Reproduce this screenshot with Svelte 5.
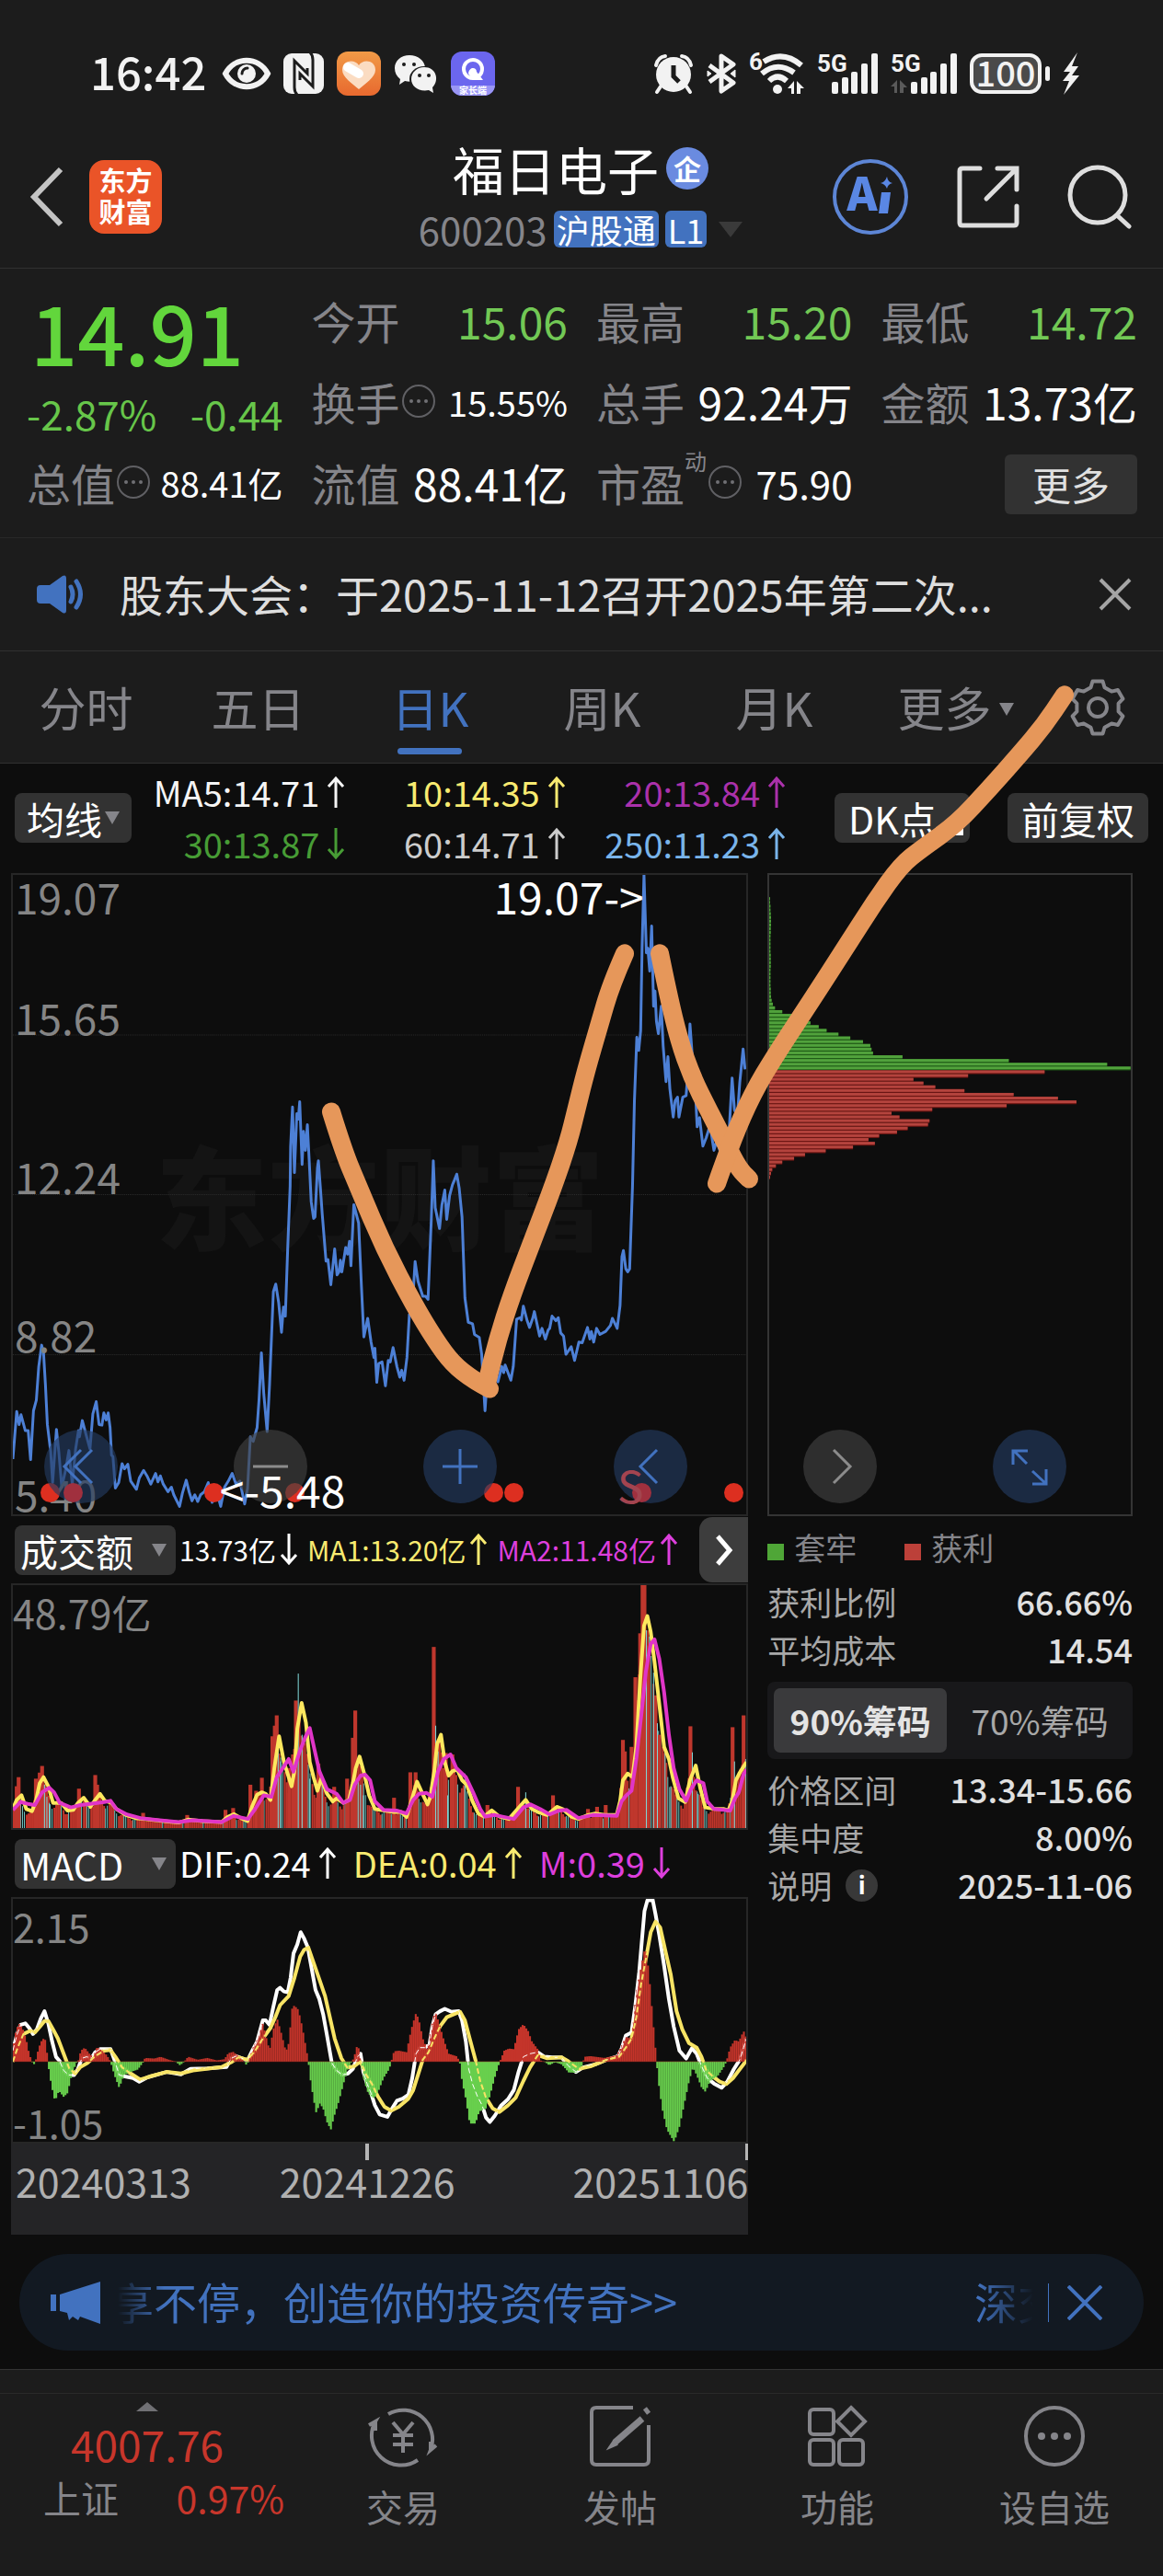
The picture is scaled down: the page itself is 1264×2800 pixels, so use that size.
<script lang="ts">
  type Point = [number, number];

  interface Quote {
    label: string;
    value: string;
    tone?: 'down';
    size?: 'small' | 'medium';
    hint?: boolean;
    sup?: string;
  }

  const quotes: Quote[] = [
    { label: '今开', value: '15.06', tone: 'down' },
    { label: '最高', value: '15.20', tone: 'down' },
    { label: '最低', value: '14.72', tone: 'down' },
    { label: '换手', value: '15.55%', size: 'small', hint: true },
    { label: '总手', value: '92.24万' },
    { label: '金额', value: '13.73亿' },
    { label: '总值', value: '88.41亿', size: 'small', hint: true },
    { label: '流值', value: '88.41亿' },
    { label: '市盈', value: '75.90', size: 'medium', hint: true, sup: '动' },
  ];

  const tabs = ['分时', '五日', '日K', '周K', '月K', '更多'];
  let activeTab = $state('日K');
  let chipRange = $state('90%筹码');

  const averages = [
    { text: 'MA5:14.71', color: '#f5f5f5', up: true },
    { text: '10:14.35', color: '#f8ea70', up: true },
    { text: '20:13.84', color: '#ab31ab', up: true },
    { text: '30:13.87', color: '#479c35', up: false },
    { text: '60:14.71', color: '#cccccc', up: true },
    { text: '250:11.23', color: '#79b4ea', up: true },
  ];

  const volumeValues = [
    { text: '13.73亿', color: '#ffffff', up: false },
    { text: 'MA1:13.20亿', color: '#f8ea70', up: true },
    { text: 'MA2:11.48亿', color: '#dd3fdd', up: true },
  ];

  const macdValues = [
    { text: 'DIF:0.24', color: '#ffffff', up: true },
    { text: 'DEA:0.04', color: '#f8ea70', up: true },
    { text: 'M:0.39', color: '#dd3fdd', up: false },
  ];

  // event markers along the bottom of the price chart, in % of its width
  const markers = [
    { at: 5, dim: false },
    { at: 8.1, dim: true },
    { at: 27.4, dim: false },
    { at: 38.4, dim: false },
    { at: 65.5, dim: false },
    { at: 68.2, dim: false },
    { at: 85.7, dim: true },
    { at: 98.2, dim: false },
  ];

  const priceLine =
    '24,893 32,737 37,780 41,748 50,800 56,800 61,895 67,735 73,700 78,590 84,520 88,545 92,650 96,780 103,870 107,970 115,796 120,870 126,985 134,930 141,865 148,975 155,860 161,800 163,820 169,767 178,820 185,860 191,745 198,705 204,780 210,782 214,742 219,765 223,742 227,790 230,880 233,885 238,988 245,970 252,908 257,925 264,910 270,965 282,992 288,955 297,930 304,948 312,975 322,940 327,968 332,948 338,975 348,1000 355,985 360,1010 372,1048 378,1005 386,962 392,1000 398,1030 404,1010 410,1032 416,1010 424,1000 432,970 440,1035 450,1000 458,1048 466,985 474,965 482,940 490,975 498,965 508,1040 514,990 520,820 526,835 534,790 538,700 543,545 548,680 555,803 560,650 568,345 573,320 579,380 585,478 589,395 593,425 598,200 603,0 ' +
    '604,-130 608,-260 612,-45 617,-238 620,-220 623,-277 628,-72 631,-180 635,-118 639,-202 643,-80 647,50 652,105 655,100 660,-60 662,-84 666,0 670,90 678,245 682,240 688,322 696,205 701,290 705,280 708,242 711,280 719,200 723,222 727,180 730,260 736,60 746,120 752,330 757,493 765,432 772,510 778,560 780,530 784,642 788,580 795,575 802,653 808,570 812,575 818,528 826,590 832,625 836,602 841,635 847,560 852,420 858,400 864,246 870,310 880,360 886,360 891,370 898,100 902,-84 906,70 915,138 920,60 926,12 930,108 936,30 942,-5 946,-20 951,-40 956,5 ' +
    '962,100 968,365 975,445 984,450 988,485 998,495 1003,550 1010,735 1014,640 1025,580 1037,640 1045,590 1049,610 1052,585 1064,635 1069,590 1076,435 1084,430 1086,438 1090,392 1098,440 1103,462 1110,430 1113,410 1124,490 1129,465 1136,500 1142,470 1145,465 1150,425 1158,440 1163,430 1168,480 1174,490 1179,550 1190,525 1197,570 1206,510 1213,512 1224,462 1229,500 1232,475 1237,510 1243,465 1250,485 1262,475 1272,455 1276,432 1286,465 1292,390 1296,230 1299,210 1304,270 1308,280 1312,270 1318,0 ' +
    '1322,-280 1327,-488 1331,-445 1335,-510 1338,-780 1342,-1020 1347,-765 1350,-780 1354,-705 1358,-853 1362,-590 1365,-640 1368,-540 1372,-500 1378,-590 1382,-460 1388,-343 1392,-425 1396,-320 1403,-227 1407,-280 1412,-292 1415,-227 1423,-292 1430,-297 1434,-380 1438,-532 1444,-400 1450,-290 1453,-195 1458,-225 1465,-132 1472,-160 1480,-200 1488,-118 1494,-150 1500,-120 1510,-80 1518,-130 1526,-355 1531,-250 1537,-230 1542,-340 1549,-450 1553,-383';

  const volumeMa1 =
    '24,985 32,955 42,940 52,985 64,992 72,960 80,900 88,880 98,910 108,965 125,965 138,990 150,988 160,965 172,948 186,978 196,955 206,935 216,958 230,965 240,985 260,1005 280,1015 310,1020 340,1025 370,1030 390,1020 420,1025 460,1028 472,1012 486,1002 500,1015 514,1025 524,975 534,938 544,930 552,935 562,955 570,850 580,745 590,830 598,870 606,910 612,860 618,720 627,635 636,700 644,830 652,880 660,925 668,885 680,935 692,960 700,950 714,965 726,955 734,900 740,850 748,812 758,870 768,940 780,985 800,990 820,995 835,995 846,1012 856,960 868,895 878,930 890,970 896,945 904,860 910,770 918,740 926,830 934,875 942,860 952,855 962,890 972,905 984,960 996,1000 1008,1010 1024,990 1040,1010 1060,1018 1078,985 1095,955 1108,985 1120,995 1140,1005 1160,978 1172,985 1190,1010 1205,1018 1225,1005 1240,1000 1260,1005 1285,1005 1292,960 1298,890 1308,868 1318,880 1326,780 1334,560 1342,380 1349,348 1356,400 1364,500 1374,640 1384,780 1394,820 1402,880 1414,950 1428,962 1438,890 1450,842 1460,920 1470,980 1490,985 1508,985 1518,990 1526,960 1534,890 1542,865 1550,845 1556,830';

  const volumeMa2 =
    '24,988 40,962 55,968 70,972 85,930 100,915 110,930 122,965 145,980 165,972 185,968 200,965 215,962 228,958 240,985 262,1003 290,1015 330,1022 370,1028 400,1022 460,1028 485,1008 515,1018 530,985 548,940 564,945 575,880 590,845 600,820 610,862 622,800 634,750 644,718 654,790 664,860 680,920 700,935 714,965 728,955 738,905 750,875 760,872 770,890 780,960 798,988 825,990 846,1000 860,955 872,935 888,932 900,945 912,860 924,820 938,805 950,850 970,880 985,930 1000,985 1010,1010 1030,1005 1070,1018 1090,980 1105,970 1125,985 1145,1003 1165,990 1180,988 1205,1015 1235,1005 1285,1008 1295,960 1305,940 1316,925 1326,820 1336,680 1346,530 1356,440 1364,425 1374,490 1384,600 1394,740 1404,850 1416,920 1430,958 1440,920 1452,890 1466,900 1474,960 1488,985 1522,990 1532,950 1540,930 1550,870 1556,855';

  const upSpikes: Point[] = [
    [32, 910], [36, 880], [72, 885], [80, 865], [85, 843], [162, 918], [196, 873], [200, 905],
    [296, 998], [388, 1005], [468, 988], [484, 982], [520, 905], [532, 925], [544, 882], [566, 745],
    [571, 710], [575, 676], [601, 850], [609, 805], [615, 627], [662, 835], [695, 912], [722, 885],
    [734, 750], [739, 660], [820, 948], [854, 864], [865, 864], [903, 450], [928, 800], [942, 805],
    [1015, 972], [1079, 912], [1152, 940], [1225, 985], [1244, 978], [1262, 972], [1298, 757],
    [1302, 795], [1316, 780], [1324, 550], [1334, 405], [1339, 246], [1343, 246], [1351, 445],
    [1366, 610], [1374, 740], [1439, 712], [1527, 715], [1550, 676],
  ];

  const downSpikes: Point[] = [
    [90, 905], [95, 945], [100, 965], [578, 795], [583, 828], [620, 538], [628, 740], [644, 885],
    [670, 905], [745, 895], [750, 905], [756, 940], [907, 710], [912, 795], [932, 940], [968, 868],
    [1095, 930], [1347, 395], [1362, 535], [1370, 702], [1386, 800], [1398, 910], [1443, 798],
    [1455, 935], [1531, 828], [1555, 820],
  ];

  const histogram =
    '24,690 28,640 36,600 44,615 52,655 58,700 64,726 67,738 71,726 78,680 86,650 92,655 97,720 98,740 104,800 112,857 120,822 130,842 138,830 146,775 156,730 160,726 166,690 174,680 184,700 192,712 200,678 210,690 220,705 228,726 236,770 246,812 256,770 270,760 285,752 296,728 300,714 320,716 332,710 350,720 364,726 373,738 382,726 390,710 410,720 430,714 450,722 466,718 474,698 484,694 494,706 506,724 512,738 517,722 526,680 536,650 546,600 552,640 560,690 568,620 576,585 584,630 592,680 598,690 603,620 608,540 614,545 620,555 628,610 636,680 641,724 645,780 652,850 658,898 664,862 672,880 680,925 688,950 694,910 704,860 714,800 724,745 736,715 744,666 748,700 752,735 758,790 766,830 778,848 788,820 798,780 810,750 814,727 820,692 830,690 846,695 856,620 866,565 872,590 880,650 890,690 900,600 906,560 914,600 924,655 934,700 950,708 957,724 962,790 970,850 978,930 990,930 998,890 1012,880 1020,840 1030,780 1040,730 1050,690 1060,683 1070,685 1080,620 1090,603 1100,625 1108,660 1120,685 1126,722 1136,728 1144,738 1156,728 1170,735 1185,762 1200,762 1212,740 1218,710 1230,708 1260,714 1285,705 1294,680 1304,645 1316,650 1326,500 1334,430 1345,345 1352,430 1360,580 1368,720 1372,790 1380,880 1390,950 1405,990 1416,940 1428,850 1436,790 1444,745 1452,770 1462,810 1470,825 1480,790 1495,775 1508,745 1514,726 1522,680 1532,655 1540,660 1550,625 1556,650';

  const difLine =
    '24,690 32,640 40,605 50,600 58,615 66,635 74,620 82,585 90,560 98,600 106,660 114,710 122,725 130,755 140,770 152,770 160,750 168,715 178,710 188,715 196,695 206,685 228,685 236,720 246,770 258,775 275,780 288,792 305,778 345,760 375,768 395,750 430,748 470,744 480,715 490,708 514,722 524,690 534,660 546,590 552,590 560,605 568,545 576,490 582,483 590,495 598,498 604,450 610,370 618,340 625,300 632,320 640,350 648,420 656,490 664,520 672,570 680,640 690,730 700,755 712,770 724,765 734,750 744,710 750,700 756,760 764,800 772,830 780,870 790,900 806,908 816,880 826,855 838,848 850,835 858,780 866,700 874,680 884,680 894,670 900,610 907,570 916,560 926,552 940,562 955,560 962,590 970,660 976,750 984,800 994,840 1004,870 1012,910 1020,925 1030,905 1044,870 1058,850 1070,820 1080,760 1090,710 1104,700 1120,695 1134,710 1150,712 1170,712 1184,740 1200,760 1215,745 1240,735 1260,722 1288,708 1296,680 1304,640 1316,630 1324,540 1332,430 1338,320 1343,230 1349,195 1360,192 1366,240 1374,310 1384,410 1394,520 1404,610 1416,690 1430,716 1442,682 1452,700 1462,740 1474,780 1488,798 1504,812 1516,792 1530,750 1542,720 1550,680 1556,650';

  const deaLine =
    '24,726 34,680 46,635 60,625 70,630 80,612 90,592 98,592 108,620 118,650 130,700 142,750 154,765 164,745 180,730 196,708 214,690 228,688 238,710 252,745 270,765 290,785 310,775 345,760 375,765 400,755 460,744 480,728 495,712 514,720 530,690 546,650 562,615 572,580 582,540 600,510 612,450 624,380 632,358 641,350 652,400 664,455 676,510 686,580 696,650 710,715 722,745 736,742 750,725 762,770 774,800 786,840 800,875 814,888 830,875 850,848 860,820 870,770 880,720 892,695 904,650 916,610 930,580 945,570 958,562 968,590 978,650 990,720 1000,790 1012,845 1026,880 1040,892 1058,870 1074,845 1090,790 1104,745 1120,705 1140,715 1170,712 1184,725 1206,750 1230,742 1260,722 1290,710 1304,680 1316,650 1326,580 1336,470 1348,370 1356,300 1366,265 1376,285 1388,370 1398,440 1410,560 1422,620 1436,665 1452,680 1462,710 1472,755 1486,775 1500,792 1514,800 1528,780 1540,755 1550,735 1556,720';

  // chip distribution, one bar per price step, top to bottom
  const chips = [
    3, 3, 4, 4, 5, 6, 6, 6, 5, 5, 4, 4, 4, 4, 4, 5, 5, 5, 5, 4, 4, 4, 4, 4, 5, 5, 6, 8, 12, 19, 43,
    76, 106, 136, 163, 189, 228, 267, 309, 333, 337, 342, 439, 789, 1113, 1190, 907, 655, 475, 508,
    547, 643, 805, 951, 1012, 782, 537, 403, 429, 528, 523, 456, 421, 362, 327, 348, 276, 186, 118,
    82, 43, 22, 10, 6, 3,
  ];
  const TRAPPED = 46;

  const inkStrokes = [
    '360,1208 373,1250 390,1291 418,1357 450,1418 473,1456 492,1482 514,1499 532,1509',
    '679,1036 664,1070 651,1115 637,1163 627,1203 618,1240 601,1290 578,1350 556,1408 541,1455 529,1503',
    '717,1036 726,1080 738,1130 752,1170 771,1208 790,1245 803,1270 814,1281',
    '779,1286 795,1240 818,1188 843,1146 880,1090 920,1028 950,981 979,940 1002,922 1040,895 1075,857 1108,820 1135,788 1157,755',
  ];

  function parse(points: string): Point[] {
    return points.split(' ').map((p) => p.split(',').map(Number) as Point);
  }

  /** Smooth a hand-drawn stroke by curving through segment midpoints */
  function smooth(points: string): string {
    const pts = parse(points);
    let d = `M${pts[0]}`;
    for (let i = 1; i < pts.length - 1; i++) {
      const mid = [(pts[i][0] + pts[i + 1][0]) / 2, (pts[i][1] + pts[i + 1][1]) / 2];
      d += `Q${pts[i]} ${mid}`;
    }
    return `${d}L${pts[pts.length - 1]}`;
  }

  function sample(points: Point[], x: number): number {
    const i = points.findIndex((p) => p[0] >= x);
    if (i <= 0) return points[i === 0 ? 0 : points.length - 1][1];
    const [x0, y0] = points[i - 1];
    const [x1, y1] = points[i];
    return y0 + ((y1 - y0) * (x - x0)) / (x1 - x0);
  }

  const STEP = 3.85;
  const days = Array.from({ length: 398 }, (_, i) => 24 + i * STEP);

  const ma1 = parse(volumeMa1);
  const volumeBars = days.map((x, i) => {
    const base = sample(ma1, x + 6);
    const wobble = 0.72 + 0.3 * Math.abs(Math.sin(i * 2.7));
    const falling = sample(ma1, x + 5) > sample(ma1, x - 5) + 2;
    const down = falling ? i % 5 < 2 : i % 11 === 4;
    return { x, h: (1048 - base) * wobble, down };
  });

  const hist = parse(histogram);
  const macdBars = days.map((x) => ({ x, y: sample(hist, x + STEP / 2) }));

  /** Cog outline with six teeth, centred on 32,32 */
  function cog(): string {
    const pts: string[] = [];
    for (let t = 0; t < 6; t++) {
      for (const [offset, r] of [[-19, 23], [-11, 29], [11, 29], [19, 23]]) {
        const a = ((t * 60 - 90 + offset) * Math.PI) / 180;
        pts.push(`${(32 + r * Math.cos(a)).toFixed(1)},${(32 + r * Math.sin(a)).toFixed(1)}`);
      }
    }
    return pts.join(' ');
  }
</script>

{#snippet arrow(up: boolean)}
  <svg class="arrow" viewBox="0 0 20 36" aria-hidden="true">
    <path d={up ? 'M10 35V3M2 12L10 3L18 12' : 'M10 1V33M2 24L10 33L18 24'} />
  </svg>
{/snippet}

{#snippet reading(item: { text: string; color: string; up: boolean })}
  <span class="reading" style:color={item.color}>{item.text}{@render arrow(item.up)}</span>
{/snippet}

{#snippet signal(idle: boolean)}
  <svg width={idle ? 72 : 65} height="46" viewBox="{idle ? 0 : 7} 0 {idle ? 72 : 65} 46" aria-hidden="true">
    <text x={idle ? 0 : 6} y="21" class="net">5G</text>
    {#if idle}
      <path d="M7 30v14H4v-7H0zM10 44V30l8 8h-4v6z" fill="#5a5a5a" />
    {/if}
    <g fill="#f2f2f2">
      <rect x="22" y="32" width="7" height="13" rx="2" />
      <rect x="33" y="27" width="7" height="18" rx="2" />
      <rect x="43" y="21" width="7" height="24" rx="2" />
      <rect x="54" y="12" width="7" height="33" rx="2" />
      <rect x="65" y="1" width="7" height="44" rx="2" />
    </g>
  </svg>
{/snippet}

<div class="page">
  <div class="status">
    <div class="status__side">
      <span class="clock">16:42</span>
      <svg width="52" height="36" viewBox="0 0 52 36" aria-hidden="true">
        <path d="M3 18C13 -1 39 -1 49 18C39 37 13 37 3 18Z" fill="none" stroke="#f2f2f2" stroke-width="6" />
        <circle cx="26" cy="18" r="10" fill="#f2f2f2" />
        <path d="M21 18a6 6 0 0 1 6-6" fill="none" stroke="#1c1c1c" stroke-width="3" stroke-linecap="round" />
      </svg>
      <svg width="44" height="44" viewBox="0 0 44 44" aria-hidden="true">
        <rect width="44" height="44" rx="9" fill="#f2f2f2" />
        <path d="M15 45Q12 42 12 37V8L26 22V16M29 -1Q32 2 32 7V36L18 22V29" fill="none" stroke="#1c1c1c" stroke-width="3" />
      </svg>
      <svg width="48" height="48" viewBox="0 0 48 48" aria-hidden="true">
        <defs>
          <linearGradient id="heart-bg" x1="0" y1="0" x2="0" y2="1">
            <stop offset="0" stop-color="#f19a47" />
            <stop offset="1" stop-color="#e8692f" />
          </linearGradient>
        </defs>
        <rect width="48" height="48" rx="12" fill="url(#heart-bg)" />
        <path d="M24 15C20 8 6 9 6 20C6 28 17 35 24 41C31 35 42 28 42 20C42 9 28 8 24 15Z" fill="#fbdcc2" />
        <path d="M12 17L24 24" stroke="#fff" stroke-width="10" stroke-linecap="round" />
      </svg>
      <svg width="48" height="44" viewBox="0 0 48 44" aria-hidden="true">
        <path d="M17 2C8 2 1 8 1 16C1 21 3 25 7 28L6 34L12 30C25 33 34 25 34 16C34 8 26 2 17 2Z" fill="#f2f2f2" />
        <ellipse cx="33" cy="28" rx="16" ry="14" fill="#1c1c1c" />
        <path d="M33 15C25 15 19 21 19 28C19 36 27 42 38 40L43 43L42 37C50 29 46 15 33 15Z" fill="#f2f2f2" />
        <g fill="#1c1c1c">
          <circle cx="11" cy="12" r="2" /><circle cx="22" cy="12" r="2" />
          <circle cx="28" cy="24" r="2" /><circle cx="38" cy="24" r="2" />
        </g>
      </svg>
      <svg width="48" height="48" viewBox="0 0 48 48" aria-hidden="true">
        <rect width="48" height="48" rx="12" fill="#6b66ee" />
        <path d="M0 37H48A12 12 0 0 1 36 48H12A12 12 0 0 1 0 37Z" fill="#9a96f5" />
        <circle cx="24" cy="19" r="10" fill="none" stroke="#fff" stroke-width="4" />
        <path d="M19 24C20 16 28 17 28 22L35 31H24Z" fill="#fff" />
        <text x="24" y="46" class="mini">家长端</text>
      </svg>
    </div>
    <div class="status__side">
      <svg width="44" height="44" viewBox="0 0 44 44" aria-hidden="true">
        <circle cx="22" cy="23" r="19" fill="#f2f2f2" />
        <path d="M3 13Q5 4 13 3M41 13Q39 4 31 3M8 36L4 42M36 36L40 42" stroke="#f2f2f2" stroke-width="4" fill="none" stroke-linecap="round" />
        <path d="M22 13V25L28 31" fill="none" stroke="#1c1c1c" stroke-width="5" />
      </svg>
      <svg width="32" height="44" viewBox="0 0 32 44" aria-hidden="true">
        <path d="M3 13L29 32L16 41V3L29 12L3 31" fill="none" stroke="#f2f2f2" stroke-width="5" stroke-linejoin="round" />
        <path d="M1 19L5 22L1 25ZM31 18L26 22L31 26Z" fill="#f2f2f2" stroke="#f2f2f2" />
      </svg>
      <svg width="61" height="46" viewBox="0 0 61 46" aria-hidden="true">
        <text x="0" y="19" class="net">6</text>
        <g fill="none" stroke="#f2f2f2" stroke-width="6">
          <path d="M16 10Q37 -3 57 14" /><path d="M14 23Q31 9 49 22" /><path d="M22 31Q31 22 41 31" />
        </g>
        <circle cx="31" cy="40" r="5" fill="#f2f2f2" />
        <path d="M49 31V45H46V39H42ZM52 45V31L60 39H56V45Z" fill="#f2f2f2" />
      </svg>
      {@render signal(false)}
      {@render signal(true)}
      <span class="battery"><b>100</b></span>
      <svg width="18" height="46" viewBox="0 0 18 46" aria-hidden="true">
        <path d="M16 0L1 21H8L0 31H7L1 46L18 25H10L17 15H10Z" fill="#f2f2f2" />
      </svg>
    </div>
  </div>

  <header class="header">
    <div class="header__left">
      <button class="bare" type="button" aria-label="返回">
        <svg width="38" height="66" viewBox="0 0 38 66"><path d="M34 3L5 33L34 63" fill="none" stroke="#c4c4c4" stroke-width="6" /></svg>
      </button>
      <a class="logo" href="#home">东方<br />财富</a>
    </div>
    <div class="header__title">
      <h1>福日电子<span class="badge">企</span></h1>
      <div class="code">
        <span>600203</span><span class="tag">沪股通</span><span class="tag">L1</span><i class="caret caret--dim"></i>
      </div>
    </div>
    <div class="header__right">
      <button class="bare" type="button" aria-label="AI">
        <svg width="84" height="84" viewBox="0 0 84 84">
          <circle cx="42" cy="42" r="39" fill="none" stroke="#5d86d6" stroke-width="4" />
          <text x="33" y="57" class="ai">A</text>
          <path d="M54 37H64L61 60H51ZM60 20Q61 26 66 27Q61 28 60 33Q58 28 53 27Q58 26 60 20Z" fill="#5a87e4" />
        </svg>
      </button>
      <button class="bare" type="button" aria-label="分享">
        <svg width="68" height="68" viewBox="0 0 68 68" fill="none" stroke="#dedede" stroke-width="5" stroke-linecap="round">
          <path d="M25 3H6Q3 3 3 6V62Q3 65 6 65H62Q65 65 65 62V44M44 3H65V26M64 4L32 36" />
        </svg>
      </button>
      <button class="bare" type="button" aria-label="搜索">
        <svg width="70" height="70" viewBox="0 0 70 70" fill="none" stroke="#dedede" stroke-width="5" stroke-linecap="round">
          <circle cx="33" cy="33" r="30" /><path d="M54 55L67 67" />
        </svg>
      </button>
    </div>
  </header>

  <section class="quote">
    <div class="quote__price">
      <strong>14.91</strong>
      <div><span>-2.87%</span><span>-0.44</span></div>
    </div>
    {#each quotes as q}
      <div class="cell">
        <span class="cell__label">
          {q.label}{#if q.sup}<sup>{q.sup}</sup>{/if}{#if q.hint}<i class="hint"><i></i><i></i><i></i></i>{/if}
        </span>
        <span class="cell__value {q.size ?? ''}" class:down={q.tone === 'down'}>{q.value}</span>
      </div>
    {/each}
    <div class="cell cell--end"><button class="more" type="button">更多</button></div>
  </section>

  <section class="notice">
    <svg width="52" height="42" viewBox="0 0 52 42" aria-hidden="true">
      <path d="M4 11H14L28 1Q32 -1 32 4V38Q32 43 28 41L14 31H4Q0 31 0 27V15Q0 11 4 11Z" fill="#4272bf" />
      <path d="M37 13Q41 21 37 29M43 7Q52 21 43 35" fill="none" stroke="#4272bf" stroke-width="5" stroke-linecap="round" />
    </svg>
    <a href="#notice">股东大会：于2025-11-12召开2025年第二次...</a>
    <button class="bare" type="button" aria-label="关闭">
      <svg width="36" height="36" viewBox="0 0 36 36"><path d="M2 2L34 34M34 2L2 34" stroke="#a5a5a5" stroke-width="4" /></svg>
    </button>
  </section>

  <nav class="tabs">
    {#each tabs as tab}
      <button class="tab" class:active={tab === activeTab} type="button" onclick={() => (activeTab = tab)}>
        {tab}{#if tab === '更多'}<i class="caret caret--small"></i>{/if}
      </button>
    {/each}
    <button class="bare tabs__settings" type="button" aria-label="设置">
      <svg width="64" height="64" viewBox="0 0 64 64" fill="none" stroke="#85858a" stroke-width="4" stroke-linejoin="round">
        <polygon points={cog()} /><circle cx="32" cy="32" r="10" />
      </svg>
    </button>
  </nav>

  <main class="board">
    <div class="ma">
      <button class="chip-btn" type="button">均线<i class="caret caret--small"></i></button>
      <div class="ma__values">
        {#each averages as item}{@render reading(item)}{/each}
      </div>
      <div class="ma__actions">
        <button class="chip-btn chip-btn--corner" type="button">DK点</button>
        <button class="chip-btn" type="button">前复权</button>
      </div>
    </div>

    <div class="charts">
      <div class="charts__main">
        <div class="frame frame--tall">
          <div class="watermark">东方财富</div>
          <svg class="plot" viewBox="24 -1020 1532 2094" preserveAspectRatio="none" aria-hidden="true">
            {#each [-496, 27, 551] as y}
              <line x1="24" x2="1556" y1={y} y2={y} stroke="#2c2c2c" stroke-width="3" stroke-dasharray="2 2" />
            {/each}
            <polyline points={priceLine} stroke="#4d80d6" stroke-width="3" />
          </svg>
          <div class="scale">
            <div><span class="scale__top">19.07</span><span>15.65</span></div>
            <div><span>12.24</span></div>
            <div><span>8.82</span></div>
            <div><span>5.40</span></div>
          </div>
          {#each markers as m}
            <i class="marker" class:dim={m.dim} style:left="{m.at}%"></i>
          {/each}
          <span class="note note--high">19.07-&gt;</span>
          <span class="note note--low">&lt;-5.48</span>
          <span class="note note--sell">S</span>
        </div>

        <div class="indicator">
          <button class="chip-btn chip-btn--wide" type="button">成交额<i class="caret caret--small"></i></button>
          <div class="indicator__values indicator__values--dense">
            {#each volumeValues as item}{@render reading(item)}{/each}
          </div>
          <button class="next" type="button" aria-label="下一个指标">
            <svg width="22" height="36" viewBox="0 0 22 36"><path d="M4 3L17 18L4 33" fill="none" stroke="#fff" stroke-width="5" /></svg>
          </button>
        </div>
        <div class="frame">
          <svg class="plot" viewBox="24 246 1532 802" preserveAspectRatio="none" aria-hidden="true">
            {#each volumeBars as b}
              <rect x={b.x} y={1048 - b.h} width={b.down ? 1.9 : STEP} height={b.h} fill={b.down ? '#6fc6c2' : '#c0352b'} />
            {/each}
            {#each upSpikes as [x, y]}
              <rect x={x - 4} {y} width="8" height={1048 - y} fill="#bf372d" />
            {/each}
            {#each downSpikes as [x, y]}
              <rect x={x - 1} {y} width="2" height={1048 - y} fill="#7fd6d6" />
            {/each}
            <polyline points={volumeMa1} stroke="#fde85e" stroke-width="4" />
            <polyline points={volumeMa2} stroke="#e035c8" stroke-width="4" />
          </svg>
          <span class="corner corner--top">48.79亿</span>
        </div>

        <div class="indicator">
          <button class="chip-btn chip-btn--wide" type="button">MACD<i class="caret caret--small"></i></button>
          <div class="indicator__values">
            {#each macdValues as item}{@render reading(item)}{/each}
          </div>
        </div>
        <div class="frame">
          <svg class="plot" viewBox="24 190 1532 800" preserveAspectRatio="none" aria-hidden="true">
            <polyline points={difLine} stroke="#fff" stroke-width="4" />
            <polyline points={deaLine} stroke="#f8e465" stroke-width="4" />
            {#each macdBars as b}
              <rect x={b.x} y={Math.min(b.y, 726)} width="4" height={Math.abs(b.y - 726)} fill={b.y < 726 ? '#c4342a' : '#68cf4d'} />
            {/each}
            <line x1="24" x2="1556" y1="726" y2="726" stroke="#a02c24" />
            <polyline points={difLine} stroke="#fff" stroke-width="1" stroke-dasharray="6 3" />
            <polyline points={deaLine} stroke="#f8e465" stroke-width="2" stroke-dasharray="6 3" />
          </svg>
          <span class="corner corner--top">2.15</span>
          <span class="corner corner--bottom">-1.05</span>
        </div>
        <div class="dates">
          <span>20240313</span><span class="dates__mid">20241226</span><span>20251106</span>
        </div>
      </div>

      <aside class="charts__side">
        <div class="frame frame--tall frame--chips">
          <svg class="plot" viewBox="0 0 1190 1519" preserveAspectRatio="none" aria-hidden="true">
            {#each chips as w, i}
              <rect x="0" y={53 + i * 8.94} width={w} height="9" fill={i < TRAPPED ? '#1f5a16' : '#6b1613'} />
              <rect x="0" y={53 + i * 8.94} width={w} height="6.5" fill={i < TRAPPED ? '#51a23c' : '#b4433d'} />
            {/each}
          </svg>
        </div>
        <div class="legend">
          <span><i class="legend__trapped"></i>套牢</span>
          <span><i class="legend__profit"></i>获利</span>
        </div>
        <dl class="facts">
          <div><dt>获利比例</dt><dd>66.66%</dd></div>
          <div><dt>平均成本</dt><dd>14.54</dd></div>
        </dl>
        <div class="segment">
          {#each ['90%筹码', '70%筹码'] as range}
            <button type="button" class:active={range === chipRange} onclick={() => (chipRange = range)}>{range}</button>
          {/each}
        </div>
        <dl class="facts">
          <div><dt>价格区间</dt><dd>13.34-15.66</dd></div>
          <div><dt>集中度</dt><dd>8.00%</dd></div>
          <div><dt>说明<i class="info">i</i></dt><dd>2025-11-06</dd></div>
        </dl>
      </aside>

      <!-- Floating zoom / pan controls over both charts -->
      <div class="controls">
        <button class="round blue" type="button" aria-label="最左">
          <svg viewBox="0 0 80 80"><path d="M40 22L22 40L40 58M52 22L34 40L52 58" /></svg>
        </button>
        <button class="round" type="button" aria-label="缩小">
          <svg viewBox="0 0 80 80"><path d="M21 40H59" /></svg>
        </button>
        <button class="round blue" type="button" aria-label="放大">
          <svg viewBox="0 0 80 80"><path d="M21 40H59M40 21V59" /></svg>
        </button>
        <button class="round blue" type="button" aria-label="左移">
          <svg viewBox="0 0 80 80"><path d="M47 22L29 40L47 58" /></svg>
        </button>
        <button class="round" type="button" aria-label="右移">
          <svg viewBox="0 0 80 80"><path d="M33 22L51 40L33 58" /></svg>
        </button>
        <button class="round blue" type="button" aria-label="全屏">
          <svg viewBox="0 0 80 80"><path d="M22 38V23H38M23 23L37 37M43 59H58V43M57 58L43 45" /></svg>
        </button>
      </div>
    </div>

    <div class="banner">
      <svg width="54" height="46" viewBox="0 0 54 46" aria-hidden="true">
        <path d="M0 14H6V32H0ZM10 14L54 0V46L32 38L30 42L24 38L20 42L18 34L10 32Z" fill="#4272bf" />
      </svg>
      <a class="banner__text" href="#promo"><span>享不停，创造你的投资传奇&gt;&gt;</span><span>深交</span></a>
      <i class="banner__rule"></i>
      <button class="bare" type="button" aria-label="关闭">
        <svg width="38" height="38" viewBox="0 0 38 38"><path d="M1 1L37 37M37 1L1 37" stroke="#4272bf" stroke-width="4" /></svg>
      </button>
    </div>
  </main>

  <footer class="footer">
    <a class="index" href="#index">
      <i class="caret caret--up"></i>
      <strong>4007.76</strong>
      <span class="index__row"><span>上证</span><em>0.97%</em></span>
    </a>
    <a class="action" href="#trade">
      <svg viewBox="0 0 80 68">
        <path d="M24 10A32 32 0 0 1 70 49L76 44M70 49L70 40M56 60A32 32 0 0 1 10 18L3 22M10 18V28" />
        <path d="M29 19L40 32L51 19M40 32V52M29 33H51M29 43H51" />
      </svg>
      交易
    </a>
    <a class="action" href="#post">
      <svg viewBox="0 0 80 68">
        <path d="M54 3H14Q9 3 9 8V60Q9 65 14 65H66Q71 65 71 60V22" />
        <path d="M64 15L34 41" stroke-width="7" /><path d="M67 8L71 5" stroke-width="7" /><path d="M34 39L30 45L37 42" />
      </svg>
      发帖
    </a>
    <a class="action" href="#features">
      <svg viewBox="0 0 80 68">
        <rect x="10" y="5" width="26" height="27" rx="4" /><rect x="10" y="38" width="26" height="27" rx="4" />
        <rect x="42" y="38" width="26" height="27" rx="4" /><path d="M55 3L70 18L55 33L40 18Z" />
      </svg>
      功能
    </a>
    <a class="action" href="#watchlist">
      <svg viewBox="0 0 80 68">
        <circle cx="40" cy="34" r="31" />
        <g fill="#85858a" stroke="none"><circle cx="26" cy="34" r="4" /><circle cx="40" cy="34" r="4" /><circle cx="54" cy="34" r="4" /></g>
      </svg>
      设自选
    </a>
  </footer>

  <!-- Freehand marks drawn over the page -->
  <svg class="ink" viewBox="0 0 1264 2800" preserveAspectRatio="none" aria-hidden="true">
    {#each inkStrokes as stroke}
      <path d={smooth(stroke)} />
    {/each}
  </svg>
</div>

<style>
  :global(body) {
    background: #1c1c1c;
  }

  .page {
    position: relative;
    background: #1c1c1c;
    color: #fff;
    font-family: 'Noto Sans CJK SC', 'Noto Sans', sans-serif;
    overflow: hidden;
  }

  button {
    border: 0;
    padding: 0;
    background: none;
    color: inherit;
    font: inherit;
    cursor: pointer;
  }

  a {
    color: inherit;
    text-decoration: none;
  }

  svg {
    display: block;
    flex-shrink: 0;
  }

  .bare {
    display: block;
    flex-shrink: 0;
  }

  .caret {
    display: inline-block;
    border: 9px solid transparent;
    border-top: 15px solid #85858a;
    border-bottom: 0;
  }

  .caret--small {
    border-width: 14px 8px 0;
  }

  .caret--dim {
    border-width: 17px 13px 0;
    border-top-color: #3a3a3a;
    margin-left: 6px;
  }

  .caret--up {
    border-width: 0 12px 10px;
    border-bottom: 10px solid #707074;
  }

  /* status bar */
  .status {
    display: flex;
    justify-content: space-between;
    align-items: center;
    height: 150px;
    padding: 10px 91px 0 98px;
    box-sizing: border-box;
  }

  .status svg {
    overflow: visible;
  }

  .status__side {
    display: flex;
    align-items: center;
    gap: 14px;
  }

  .clock {
    padding: 0 4px 6px 0;
    font-size: 49px;
    line-height: 48px;
    font-weight: 500;
    color: #f2f2f2;
  }

  .net {
    font-family: Roboto, sans-serif;
    font-weight: 700;
    font-size: 26px;
    fill: #f2f2f2;
  }

  .mini {
    font-size: 10px;
    font-weight: 700;
    fill: #fff;
    text-anchor: middle;
  }

  .battery {
    display: flex;
    align-items: center;
    gap: 4px;
  }

  .battery b {
    box-sizing: border-box;
    width: 78px;
    height: 44px;
    border: 4px solid #f2f2f2;
    border-radius: 13px;
    background: #4a4a4a;
    font-size: 38px;
    line-height: 32px;
    font-weight: 500;
    text-align: center;
    color: #f2f2f2;
  }

  .battery::after {
    content: '';
    width: 5px;
    height: 16px;
    border-radius: 3px;
    background: #f2f2f2;
  }

  /* header */
  .header {
    display: grid;
    grid-template-columns: 1fr auto 1fr;
    align-items: center;
    padding: 0 34px 14px 32px;
    border-bottom: 1px solid #303030;
  }

  .header__left,
  .header__right {
    display: flex;
    align-items: center;
  }

  .header__left {
    gap: 27px;
  }

  .header__right {
    justify-content: flex-end;
    gap: 52px;
  }

  .header__title {
    padding-bottom: 8px;
  }

  .logo {
    width: 79px;
    height: 80px;
    box-sizing: border-box;
    padding-top: 4px;
    border-radius: 16px;
    background: #ea5428;
    font-size: 29px;
    line-height: 34px;
    font-weight: 700;
    text-align: center;
  }

  h1 {
    display: flex;
    align-items: center;
    justify-content: center;
    gap: 8px;
    margin: 0 0 13px;
    font-size: 56px;
    line-height: 66px;
    font-weight: 400;
  }

  .badge {
    width: 46px;
    height: 46px;
    border-radius: 50%;
    background: #6a8be0;
    font-size: 30px;
    line-height: 44px;
    font-weight: 700;
    text-align: center;
  }

  .code {
    display: flex;
    align-items: center;
    justify-content: center;
    gap: 7px;
    font-size: 42px;
    line-height: 40px;
    color: #85858a;
  }

  .tag {
    padding: 0 3px;
    border-radius: 6px;
    background: #4272bf;
    color: #fff;
    font-size: 36px;
  }

  .ai {
    font-size: 50px;
    font-weight: 900;
    fill: #5a87e4;
    text-anchor: middle;
  }

  /* quote */
  .quote {
    display: grid;
    grid-template-columns: repeat(4, 1fr);
    grid-auto-rows: 88px;
    column-gap: 31px;
    padding: 14px 28px 14px 29px;
    border-bottom: 1px solid #282828;
  }

  .quote__price {
    grid-row: span 2;
    color: #62d63c;
  }

  .quote__price strong {
    display: block;
    padding-left: 4px;
    font-size: 90px;
    line-height: 106px;
    font-weight: 500;
  }

  .quote__price div {
    display: flex;
    justify-content: space-between;
    font-size: 44px;
    line-height: 74px;
    color: #67c64a;
  }

  .cell {
    display: flex;
    align-items: center;
    justify-content: space-between;
    padding-bottom: 4px;
    font-size: 48px;
    white-space: nowrap;
  }

  .cell--end {
    justify-content: flex-end;
    padding: 0;
  }

  .cell__label {
    display: flex;
    align-items: center;
    color: #85858a;
  }

  .cell__label sup {
    align-self: flex-start;
    font-size: 24px;
    line-height: 24px;
  }

  .cell__value.down {
    color: #72c855;
  }

  .cell__value.small {
    font-size: 38px;
  }

  .cell__value.medium {
    font-size: 42px;
  }

  .hint {
    display: flex;
    align-items: center;
    justify-content: center;
    gap: 4px;
    box-sizing: border-box;
    width: 36px;
    height: 36px;
    margin-left: 2px;
    border: 2px solid #606064;
    border-radius: 50%;
  }

  .hint i {
    width: 4px;
    height: 4px;
    border-radius: 50%;
    background: #707074;
  }

  .more {
    width: 144px;
    height: 65px;
    border-radius: 6px;
    background: #323232;
    font-size: 42px;
    line-height: 60px;
    color: #e0e0e0;
  }

  /* notice */
  .notice {
    display: flex;
    align-items: center;
    gap: 38px;
    height: 122px;
    padding: 0 34px 0 40px;
    border-bottom: 1px solid #303030;
  }

  .notice a {
    flex: 1;
    padding-bottom: 2px;
    font-size: 47px;
    line-height: 60px;
    color: #dedede;
    white-space: nowrap;
  }

  /* tabs */
  .tabs {
    display: grid;
    grid-template-columns: repeat(6, 1fr) 142px;
    height: 121px;
    border-bottom: 1px solid #303030;
  }

  .tab {
    position: relative;
    padding-bottom: 2px;
    font-size: 51px;
    color: #85858a;
    white-space: nowrap;
  }

  .tab.active {
    color: #4272bf;
  }

  .tab.active::after {
    content: '';
    position: absolute;
    left: calc(50% - 36px);
    bottom: 9px;
    width: 70px;
    height: 7px;
    border-radius: 4px;
    background: #4272bf;
  }

  .tab .caret {
    margin: 0 0 12px 8px;
  }

  .tab:nth-child(6) {
    padding-left: 20px;
  }

  .tabs__settings {
    display: grid;
    place-items: center;
  }

  /* chart board */
  .board {
    background: #0d0d0d;
  }

  .ma {
    display: flex;
    align-items: center;
    height: 117px;
    padding: 0 16px 2px;
    font-size: 38px;
  }

  .chip-btn {
    position: relative;
    display: flex;
    align-items: center;
    justify-content: center;
    gap: 3px;
    height: 54px;
    padding: 0 13px;
    border-radius: 8px;
    background: #323232;
    color: #fff;
    font-size: 41px;
    line-height: 50px;
    white-space: nowrap;
  }

  .ma__actions .chip-btn {
    padding: 0 15px;
  }

  .ma__actions .chip-btn--corner {
    padding-right: 36px;
  }

  .chip-btn--corner::after {
    content: '';
    position: absolute;
    right: 7px;
    bottom: 8px;
    border: 7px solid #fff;
    border-top-color: transparent;
    border-left-color: transparent;
  }

  .chip-btn--wide {
    width: 175px;
    padding: 0 10px 0 6px;
    justify-content: space-between;
  }

  .ma__values {
    flex: 1;
    display: grid;
    grid-template-columns: 232fr 239fr 239fr;
    justify-items: end;
  }

  .ma__actions {
    display: flex;
    justify-content: space-between;
    width: 341px;
    margin-left: 53px;
  }

  .reading {
    display: flex;
    align-items: center;
    gap: 8px;
    line-height: 56px;
    white-space: nowrap;
  }

  .arrow {
    width: 20px;
    height: 36px;
    fill: none;
    stroke: currentColor;
    stroke-width: 3px;
  }

  .charts {
    position: relative;
    display: grid;
    grid-template-columns: 2.02fr 1fr;
    gap: 21px;
    padding: 0 33px 0 12px;
  }

  .frame {
    position: relative;
    box-sizing: border-box;
    height: 268px;
    border: 2px solid #262626;
  }

  .frame--tall {
    height: 699px;
  }

  .frame--chips {
    border-color: #343434;
  }

  .plot {
    position: absolute;
    inset: 0;
    width: 100%;
    height: 100%;
  }

  .plot polyline {
    fill: none;
    vector-effect: non-scaling-stroke;
    stroke-linejoin: round;
  }

  .watermark {
    position: absolute;
    inset: 0;
    display: grid;
    place-items: center;
    padding-bottom: 6px;
    font-size: 122px;
    font-weight: 900;
    color: #141414;
  }

  .scale {
    position: absolute;
    inset: 0;
    display: grid;
    grid-template-rows: repeat(4, 1fr);
    padding: 0 0 4px 2px;
    font-size: 46px;
    line-height: 38px;
    color: #858585;
  }

  .scale div {
    display: flex;
    flex-direction: column;
    justify-content: flex-end;
  }

  .scale__top {
    margin: 4px 0 auto;
  }

  .marker {
    position: absolute;
    bottom: 13px;
    width: 21px;
    height: 21px;
    margin-left: -10px;
    border-radius: 50%;
    background: #dd2f20;
  }

  .marker.dim {
    z-index: 2;
    background: #a0303e;
  }

  .note {
    position: absolute;
    z-index: 2;
    font-size: 48px;
    line-height: 44px;
  }

  .note--high {
    top: 0;
    right: 14%;
  }

  .note--low {
    bottom: 6px;
    left: 28.2%;
  }

  .note--sell {
    bottom: 11px;
    left: 82.4%;
    color: #a34450;
  }

  .indicator {
    display: flex;
    align-items: center;
    height: 73px;
    padding-left: 4px;
    font-size: 38px;
  }

  .indicator__values {
    display: flex;
    flex: 1;
    gap: 18px;
    padding: 0 0 2px 4px;
  }

  .indicator__values--dense {
    gap: 10px;
    font-size: 30px;
  }

  .indicator__values--dense .reading {
    gap: 4px;
  }

  .next {
    display: grid;
    place-items: center;
    width: 53px;
    height: 71px;
    border-radius: 14px 0 0 14px;
    background: #3d3d3d;
  }

  .corner {
    position: absolute;
    left: 0;
    font-size: 43px;
    line-height: 42px;
    color: #858585;
  }

  .corner--top {
    top: 8px;
  }

  .corner--bottom {
    bottom: 1px;
  }

  .dates {
    position: relative;
    display: flex;
    justify-content: space-between;
    box-sizing: border-box;
    height: 99px;
    padding: 18px 0 0 5px;
    background:
      linear-gradient(#b5b5b5, #b5b5b5) 48.3% 0 / 4px 18px no-repeat,
      linear-gradient(#b5b5b5, #b5b5b5) 100% 0 / 3px 18px no-repeat,
      #242426;
    font-size: 43px;
    line-height: 44px;
    color: #b0b0b0;
  }

  .dates__mid {
    margin-right: 32px;
  }

  .legend {
    display: flex;
    gap: 52px;
    height: 67px;
    font-size: 34px;
    line-height: 68px;
    color: #85858a;
  }

  .legend i {
    display: inline-block;
    width: 18px;
    height: 18px;
    margin-right: 11px;
    background: #4fa637;
  }

  .legend .legend__profit {
    background: #bc4039;
  }

  .facts {
    margin: 0;
    font-size: 35px;
    line-height: 50px;
  }

  .facts div {
    display: flex;
    justify-content: space-between;
    height: 52px;
  }

  .facts dt {
    display: flex;
    align-items: center;
    color: #a8a8a8;
  }

  .facts dd {
    margin: 0;
    font-size: 36px;
    font-weight: 500;
    color: #e0e0e0;
  }

  .info {
    width: 35px;
    height: 35px;
    margin-left: 15px;
    border-radius: 50%;
    background: #383838;
    font-size: 26px;
    line-height: 32px;
    font-style: normal;
    font-weight: 700;
    text-align: center;
    color: #fff;
  }

  .segment {
    display: grid;
    grid-template-columns: 1fr 1fr;
    gap: 7px;
    margin: 9px 0 7px;
    padding: 7px;
    border-radius: 8px;
    background: #18181a;
  }

  .segment button {
    height: 70px;
    border-radius: 7px;
    font-size: 37px;
    line-height: 64px;
    color: #a8a8a8;
    white-space: nowrap;
  }

  .segment .active {
    background: #3a3a3c;
    color: #e4e4e4;
    font-weight: 700;
  }

  .controls {
    position: absolute;
    top: 605px;
    left: 48px;
    right: 105px;
    display: flex;
    justify-content: space-between;
  }

  .round {
    width: 80px;
    height: 80px;
    border-radius: 50%;
    background: rgba(64, 64, 64, 0.65);
  }

  .round svg {
    width: 100%;
    fill: none;
    stroke: #8c8c8c;
    stroke-width: 3px;
  }

  .round.blue {
    background: rgba(36, 58, 96, 0.65);
  }

  .round.blue svg {
    stroke: #4272bf;
  }

  /* banner */
  .banner {
    display: flex;
    align-items: center;
    height: 105px;
    margin: 21px 21px 0;
    padding: 0 45px 0 34px;
    box-sizing: border-box;
    border-radius: 53px;
    background: #121922;
    color: #4272bf;
    font-size: 47px;
  }

  .banner__text {
    display: flex;
    flex: 1;
    justify-content: space-between;
    margin: 0 16px 0 19px;
    padding-bottom: 4px;
    overflow: hidden;
    white-space: nowrap;
    line-height: 68px;
    mask-image: linear-gradient(90deg, transparent, #000 50px, #000 calc(100% - 60px), transparent);
  }

  .banner__text span:first-child {
    margin-left: -8px;
  }

  .banner__text span:last-child {
    width: 64px;
  }

  .banner__rule {
    width: 1px;
    height: 42px;
    margin-right: 20px;
    background: #4272bf;
  }

  /* bottom bar */
  .board::after {
    content: '';
    display: block;
    height: 20px;
  }

  .footer {
    display: grid;
    grid-template-columns: 320fr repeat(4, 236fr);
    height: 225px;
    border-top: 1px solid #333;
    background: linear-gradient(#292929, #292929) 0 25px / 100% 1px no-repeat;
  }

  .index {
    display: flex;
    flex-direction: column;
    align-items: center;
    padding-top: 35px;
    color: #c8362b;
  }

  .index strong {
    margin-top: 5px;
    font-size: 46px;
    line-height: 60px;
    font-weight: 400;
  }

  .index__row {
    display: flex;
    justify-content: space-between;
    width: 262px;
    margin-left: 36px;
    font-size: 41px;
    line-height: 56px;
  }

  .index__row span {
    color: #85858a;
  }

  .index__row em {
    font-style: normal;
  }

  .action {
    display: flex;
    flex-direction: column;
    align-items: center;
    gap: 14px;
    padding-top: 38px;
    font-size: 40px;
    line-height: 56px;
    color: #85858a;
  }

  .action svg {
    width: 80px;
    height: 68px;
    fill: none;
    stroke: #85858a;
    stroke-width: 4px;
  }

  .ink {
    position: absolute;
    inset: 0;
    z-index: 3;
    width: 100%;
    height: 100%;
    pointer-events: none;
    fill: none;
    stroke: #e6975a;
    stroke-width: 20px;
    stroke-linecap: round;
    stroke-linejoin: round;
  }
</style>
